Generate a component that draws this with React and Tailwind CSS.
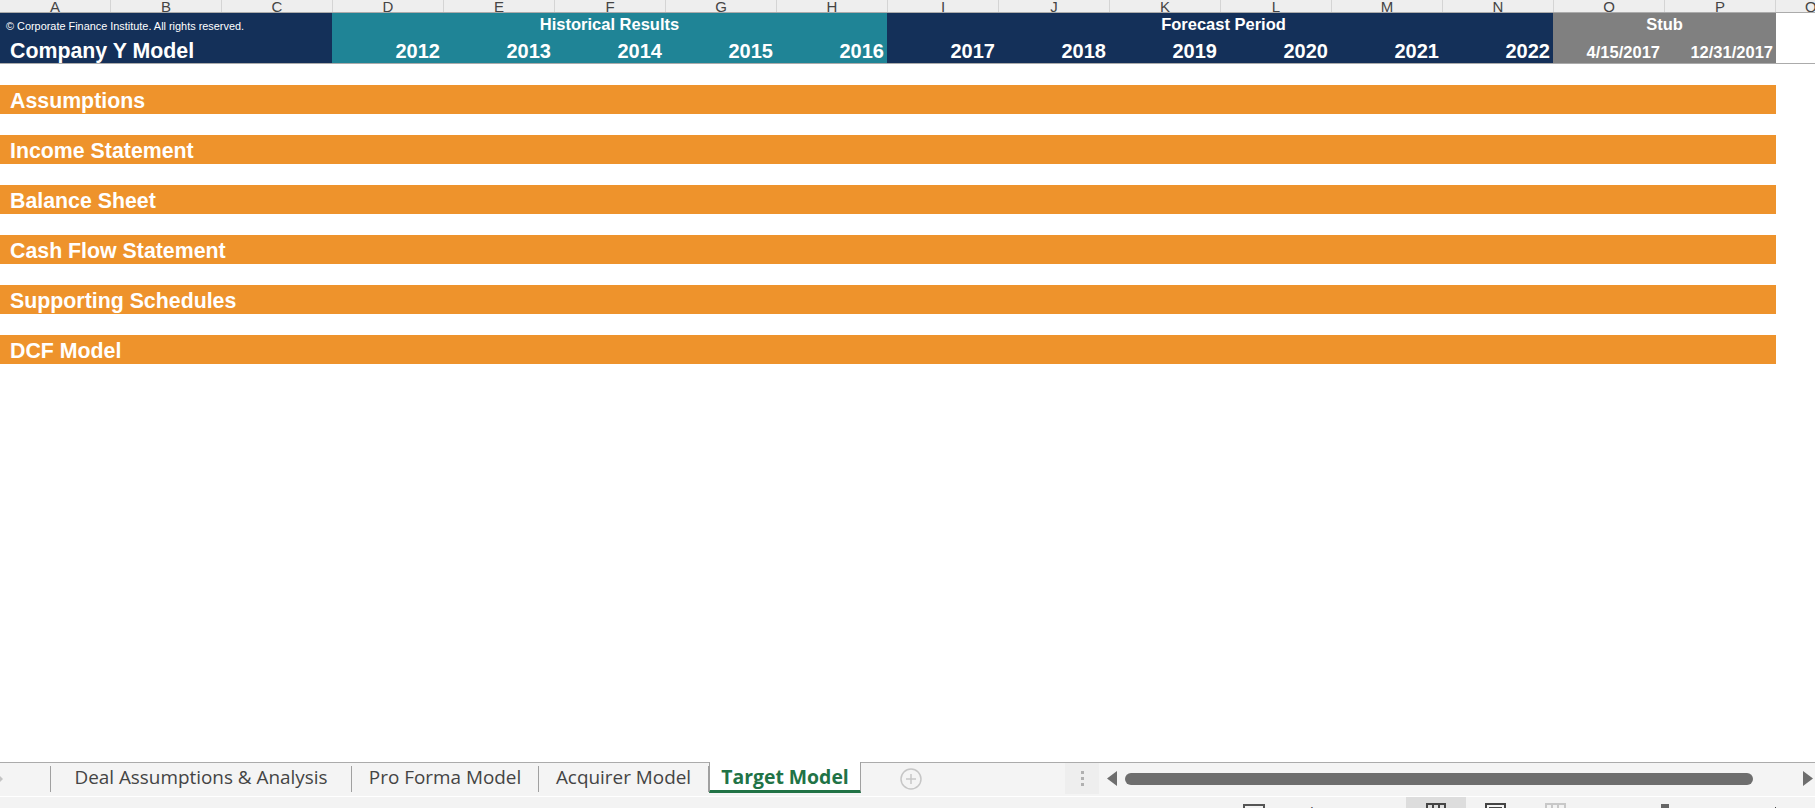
const columns = ["A", "B", "C", "D", "E", "F", "G", "H", "I", "J", "K", "L", "M", "N", "O", "P"];
const historical = ["2012", "2013", "2014", "2015", "2016"];
const forecast = ["2017", "2018", "2019", "2020", "2021", "2022"];
const sections = ["Assumptions", "Income Statement", "Balance Sheet", "Cash Flow Statement", "Supporting Schedules", "DCF Model"];

function YearCell({ children }) {
  return <div className="w-[111px] pr-[3px] text-right text-[20px] leading-[24px] font-bold">{children}</div>;
}

function Tab({ width, children }) {
  return (
    <div className={`${width} flex h-[26px] items-center justify-center border-r border-[#a0a0a0] mt-[3px] pb-[3px] text-[18.9px] text-[#444444]`}>
      {children}
    </div>
  );
}

export default function App() {
  return (
    <div className="flex h-screen flex-col overflow-hidden bg-white font-['Liberation_Sans',Arial,sans-serif]">
      {/* column letters */}
      <div className="flex h-[13px] shrink-0 overflow-hidden border-b border-[#ababab] bg-[#eeeeee]">
        {columns.map((c) => (
          <div key={c} className="flex w-[111px] shrink-0 items-end justify-center border-r border-[#d4d4d4] text-[15px] leading-[15px] text-[#444444]">
            <span className="mb-[-2px]">{c}</span>
          </div>
        ))}
        <div className="flex flex-1 items-end text-[15px] leading-[15px] text-[#444444]">
          <span className="mb-[-2px] ml-[29px]">Q</span>
        </div>
      </div>

      {/* model header */}
      <div className="shrink-0 border-b border-[#ababab]">
        <div className="flex h-[50px] text-white">
          <div className="flex w-[332px] flex-col bg-[#143059]">
            <div className="mt-[7px] pl-[6px] text-[10.9px] leading-[13px]">© Corporate Finance Institute. All rights reserved.</div>
            <div className="mt-[6px] pl-[10px] text-[21.33px] leading-[24px] font-bold">Company Y Model</div>
          </div>
          <div className="flex w-[555px] flex-col bg-[#1f8496]">
            <div className="mt-[1px] text-center text-[16.5px] leading-[20px] font-bold">Historical Results</div>
            <div className="mt-[5px] flex">
              {historical.map((y) => <YearCell key={y}>{y}</YearCell>)}
            </div>
          </div>
          <div className="flex w-[666px] flex-col bg-[#143059]">
            <div className="mt-[1px] pl-[7px] text-center text-[16.5px] leading-[20px] font-bold">Forecast Period</div>
            <div className="mt-[5px] flex">
              {forecast.map((y) => <YearCell key={y}>{y}</YearCell>)}
            </div>
          </div>
          <div className="flex w-[223px] flex-col bg-[#808080]">
            <div className="mt-[1px] text-center text-[16.5px] leading-[20px] font-bold">Stub</div>
            <div className="mt-[8px] flex text-[16.5px] leading-[20px] font-bold">
              <div className="w-[111px] pr-[4px] text-right">4/15/2017</div>
              <div className="w-[112px] pr-[3px] text-right">12/31/2017</div>
            </div>
          </div>
        </div>
      </div>

      {/* sections */}
      <div className="flex w-[1776px] flex-1 flex-col gap-[21px] pt-[21px]">
        {sections.map((s) => (
          <div key={s} className="h-[29px] bg-[#ee932c] pl-[10px] text-[21.33px] leading-[32px] font-bold text-white">{s}</div>
        ))}
      </div>

      {/* sheet tabs */}
      <div className="flex h-[34px] shrink-0 items-start border-t border-[#ababab] bg-[#f4f4f4] font-['Open_Sans',sans-serif]">
        <div className="mt-[3px] flex h-[26px] w-[51px] items-center border-r border-[#a0a0a0]">
          <svg width="4" height="8" viewBox="0 0 4 8" className="text-[#c4c4c4]"><polygon points="0,1 3,4 0,7" fill="currentColor" /></svg>
        </div>
        <Tab width="w-[301px]">Deal Assumptions &amp; Analysis</Tab>
        <Tab width="w-[187px]">Pro Forma Model</Tab>
        <Tab width="w-[170px]">Acquirer Model</Tab>
        <div className="-mt-px flex h-[31px] w-[152px] items-center justify-center border-x border-b-[3px] border-x-[#a0a0a0] border-b-[#217346] bg-white pt-[2px] text-[19.4px] font-bold text-[#217346]">
          Target Model
        </div>
        <div className="ml-[39px] mt-[5px] h-[22px] w-[22px]">
          <svg width="22" height="22" viewBox="0 0 22 22" fill="none" stroke="#c6c6c6">
            <circle cx="11" cy="11" r="10" strokeWidth="1.5" />
            <path d="M11 6v10M6 11h10" strokeWidth="1.5" />
          </svg>
        </div>
        <div className="ml-[143px] flex h-[31px] w-[34px] flex-col items-center justify-center gap-[3px] bg-[#eeeeee]">
          <span className="h-[3px] w-[3px] bg-[#b0b0b0]" />
          <span className="h-[3px] w-[3px] bg-[#b0b0b0]" />
          <span className="h-[3px] w-[3px] bg-[#b0b0b0]" />
        </div>
        <div className="ml-[8px] mt-[8px] flex flex-1 items-center">
          <svg width="10" height="15" viewBox="0 0 10 15"><polygon points="10,0 10,15 0,7.5" fill="#6e6e6e" /></svg>
          <div className="ml-[8px] h-[12px] w-[628px] rounded-full bg-[#6e6e6e]" />
          <svg width="10" height="15" viewBox="0 0 10 15" className="ml-[50px]"><polygon points="0,0 0,15 10,7.5" fill="#6e6e6e" /></svg>
        </div>
      </div>

      {/* status bar, cut off by the window edge */}
      <div className="flex h-[12px] shrink-0 items-start overflow-hidden border-t border-white bg-[#f3f3f3] font-['Open_Sans',sans-serif]">
        <div className="ml-[1243px] mt-[7px] h-[10px] w-[22px] border-2 border-[#555555]" />
        <div className="ml-[14px] mt-[5px] text-[15px] leading-[20px] text-[#444444]">Display Settings</div>
        <div className="ml-auto flex h-full w-[60px] justify-center bg-[#dddddd]">
          <div className="mt-[6px] flex h-[10px] w-[20px] border-2 border-[#444444]">
            <span className="w-[6px] border-r-2 border-[#444444]" />
            <span className="w-[6px] border-r-2 border-[#444444]" />
          </div>
        </div>
        <div className="ml-[19px] mt-[6px] h-[10px] w-[21px] border-2 border-[#444444] p-[2px]">
          <div className="h-full border-2 border-[#444444]" />
        </div>
        <div className="ml-[39px] mt-[6px] flex h-[10px] w-[21px] border-2 border-[#c8c8c8]">
          <span className="w-[6px] border-r-2 border-[#c8c8c8]" />
          <span className="w-[6px] border-r-2 border-[#c8c8c8]" />
        </div>
        <div className="ml-[95px] mt-[7px] h-[10px] w-[8px] bg-[#666666]" />
        <div className="ml-[106px] mr-[39px] mt-[10px] h-[4px] w-px bg-[#444444]" />
      </div>
    </div>
  );
}
